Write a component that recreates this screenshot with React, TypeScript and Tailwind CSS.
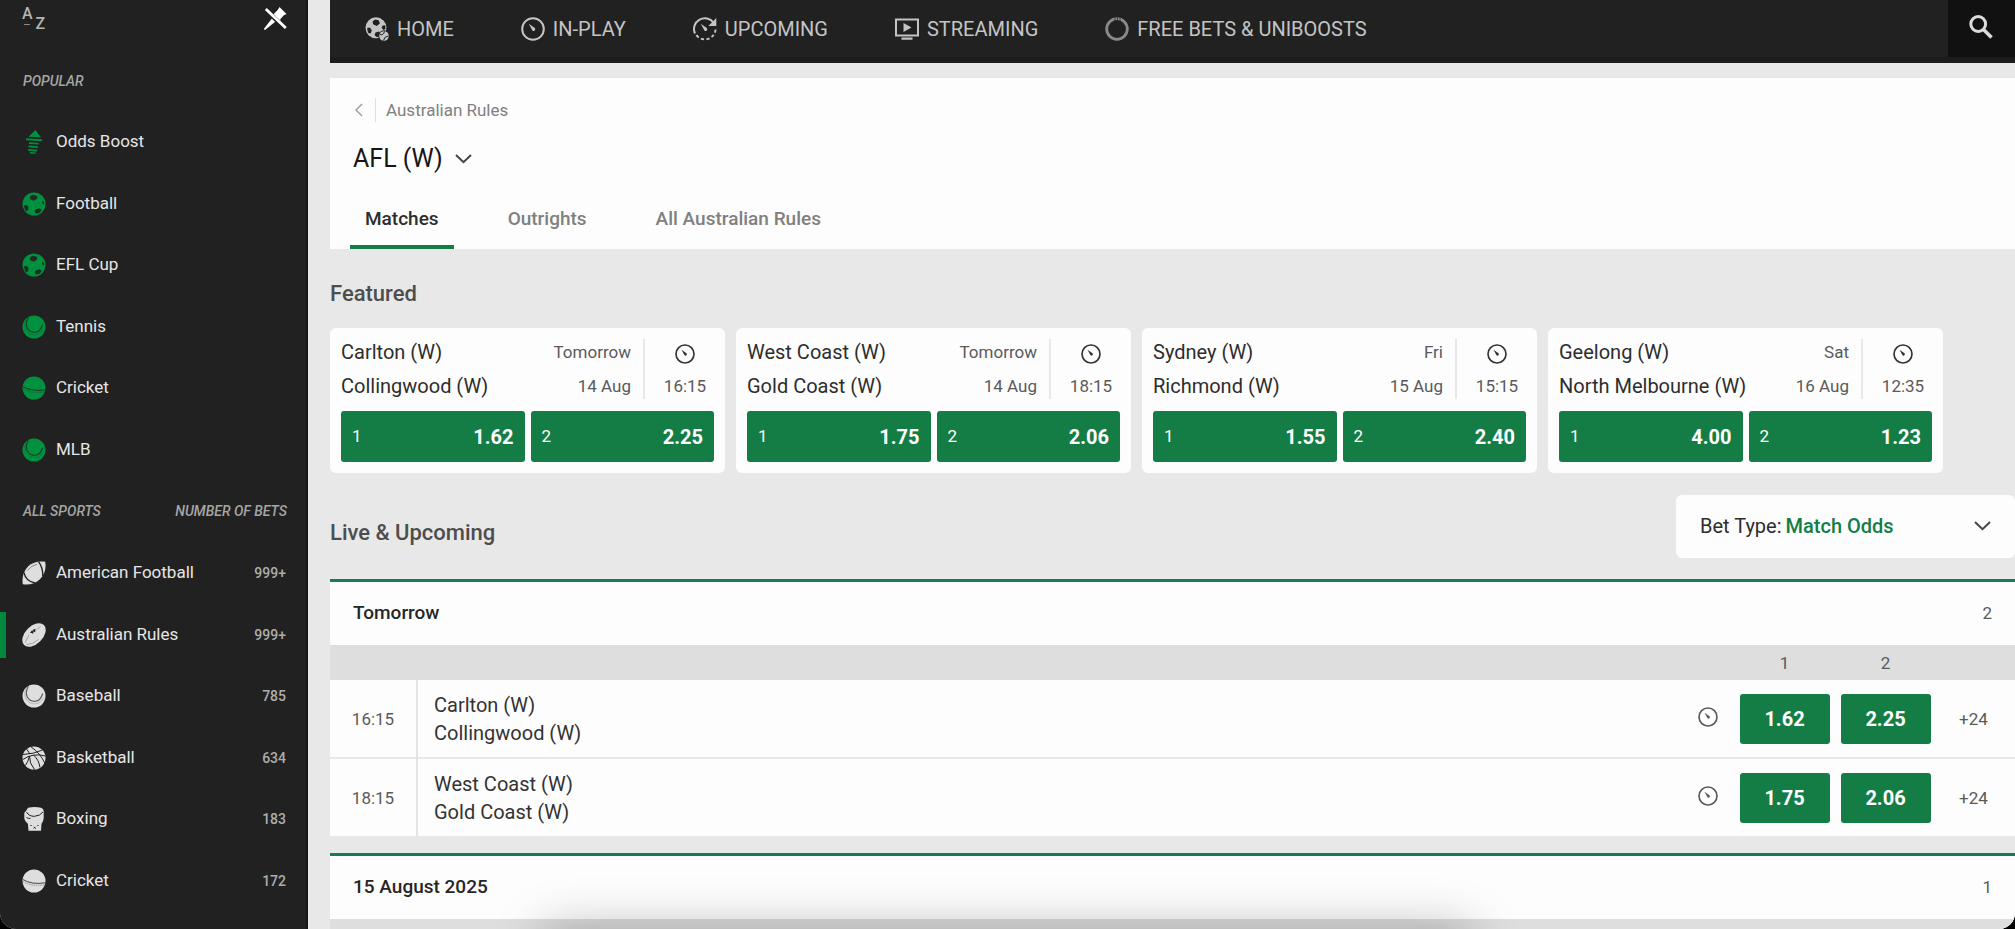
import { useState } from "react";
import type { ReactNode } from "react";

type Sport = { name: string; icon: ReactNode; count?: string; active?: boolean };

function Svg({ size = 24, className = "", children }: { size?: number; className?: string; children: ReactNode }) {
  return (
    <svg width={size} height={size} viewBox="0 0 24 24" fill="none" aria-hidden="true" className={`shrink-0 ${className}`}>
      {children}
    </svg>
  );
}

const BoostIcon = () => (
  <Svg>
    <path d="M13.500 0 19 7.500 6.500 6.800z" fill="currentColor" />
    <path d="m3.800 8.200 16.400 1-.6 2-15.400-1z" fill="currentColor" />
    <path d="m7 12.200 9.800.7-.4 1.700-9.600-.7zM6.700 15.600l9.400.7-.4 1.700-9.300-.7zM6.300 19l9 .7-.4 1.700-8.900-.7zM8 22l6 .4-.4 1.400-5.600-.4z" fill="currentColor" />
  </Svg>
);

const FootballIcon = () => (
  <Svg>
    <circle cx="12" cy="12" r="11.500" fill="currentColor" />
    <path d="m10.500 2.800 4.300 1 .5 2.800-3.400 2.200-3.700-1.500L7.900 4.500zM2 13.500l2.600-.7 2 2.400-.6 3.300-2.300.6Q2 16.500 2 13.500zM13.500 17.500l3.800-1.300 2.400 1.500-1.700 2.900-3.300 1.200-2-1.700zM20.300 8.200l1.800 2.300v2.300l-1.800-1.500z" fill="#1c2d22" />
  </Svg>
);

const BallIcon = () => (
  <Svg>
    <circle cx="12" cy="12" r="11.500" fill="currentColor" />
    <path d="M6.300 2.500Q3 8 5.300 13q2.700 4.800 8 4.300 5.200-.5 7.500-7.800" stroke="#212121" strokeOpacity=".7" strokeWidth="1.100" />
    <path d="M3.800 5Q1.500 10.500 4 15q3.300 5.200 9.500 4.800 5.200-.6 8.200-5.800" stroke="#212121" strokeOpacity=".25" strokeWidth=".8" />
  </Svg>
);

const CricketIcon = () => (
  <Svg>
    <circle cx="12" cy="12" r="11.500" fill="currentColor" />
    <path d="M.8 10.500Q10 16 23.300 13.800" stroke="#212121" strokeOpacity=".8" strokeWidth="1" />
    <path d="M.7 12.600Q10 18 23 15.700" stroke="#212121" strokeOpacity=".45" strokeWidth=".8" strokeDasharray="1.500 .8" />
  </Svg>
);

const AmericanFootballIcon = () => (
  <Svg>
    <path d="M23.200.8c1.200 6-.4 12.400-5 17.200C13.500 22.700 6.500 24.500.8 23.200-.2 17.500 1 10.500 6 5.500 10.500 1 17.500-.4 23.200.8z" fill="currentColor" />
    <path d="M2 11.500Q3.500 20 13 22M16.500.6Q21 6.500 20.800 15" stroke="#212121" strokeWidth="1.400" />
    <path d="M5.500 9.500q3.500-5 9.500-6.300" stroke="#212121" strokeOpacity=".5" strokeWidth=".9" />
  </Svg>
);

const AustralianRulesIcon = () => (
  <Svg>
    <ellipse cx="12" cy="12" rx="14" ry="8.800" transform="rotate(-45 12 12)" fill="currentColor" />
    <path d="M8.500 9.800 13.500 6.500M9.500 7.800l1.700 2.500M11.500 6.600l1.500 2.300" stroke="#212121" strokeWidth="1.300" />
    <path d="M3.200 19.500 7 12M14.500 6.500l4-3M4.500 21.500q6 .3 12-5" stroke="#212121" strokeOpacity=".35" strokeWidth=".9" />
  </Svg>
);

const BasketballIcon = () => (
  <Svg>
    <circle cx="12" cy="12" r="11.500" fill="currentColor" />
    <path d="M1 8.500Q12 8 20.500 4M9 .8Q18 7 22.800 17M.8 13.500Q11 6.500 23.500 10M7.500 10Q7 17 12.500 23.500M11.500 9Q17 14 18 21.500M4.500 3l3.500 5M3.500 19.500Q6 16 7.500 10" stroke="#212121" strokeWidth="1" />
  </Svg>
);

const BoxingIcon = () => (
  <Svg>
    <path d="M6 .8Q13-.6 19 .8q2.700.8 2.700 3.500V11q0 3-2.200 5.700L19 23.700H6.500l-.6-7Q2.300 14 2.300 10.500V6.500q0-2 1.700-2.500z" fill="currentColor" />
    <path d="M4.500 5Q7 9.500 12.500 9.300 18 9 21 5M4.500 10.500q2 1.500 4 .8" stroke="#212121" strokeWidth="1" />
    <path d="M8.500 18.500h1.200M15.300 18.500h1.200M11.800 19.800l1.700 1.700M13.500 19.800l-1.700 1.700" stroke="#212121" strokeWidth="1" />
  </Svg>
);

const ClockIcon = ({ size = 20 }: { size?: number }) => (
  <Svg size={size}>
    <circle cx="12" cy="12" r="10.800" stroke="currentColor" strokeWidth="2" />
    <path d="m7.800 6.800 6 4.300a1.700 1.700 0 0 1-2.400 2.400z" fill="currentColor" />
  </Svg>
);

const UpcomingIcon = () => (
  <Svg>
    <path d="M2 16.500A10.800 10.800 0 0 1 20.800 6" stroke="currentColor" strokeWidth="2" />
    <path d="M23.300 1v8h-8z" fill="currentColor" />
    <path d="M22.600 12.500A10.800 10.800 0 0 1 2.500 17" stroke="currentColor" strokeWidth="2" strokeDasharray="3.200 2.400" />
    <path d="m7.800 6.800 6 4.300a1.700 1.700 0 0 1-2.400 2.400z" fill="currentColor" />
  </Svg>
);

const HomeIcon = () => (
  <Svg>
    <circle cx="11" cy="10.800" r="10.500" fill="currentColor" />
    <path d="m10 2.500 3.700.8 1.200 3.200-3.200 2.400-3.600-1.700L7.600 4.500zM2.200 11l2.600-.5 2 2.700-.9 3.100H3.500Q2.200 14 2.200 11zM17.700 8.500l2.500-.2.300 3.700-2 1-2-2.200zM10.500 15.500l3.500-1 1.500 2-1 3-3 .5-2-2z" fill="#212121" />
    <circle cx="19" cy="19" r="5.800" fill="#212121" />
    <circle cx="19" cy="19" r="4.800" fill="currentColor" />
    <path d="M15 17.500q3.500 1 4.500-3M18.500 23.500q.5-4 5-4.500" stroke="#212121" strokeWidth="1" />
  </Svg>
);

const StreamingIcon = () => (
  <Svg>
    <path d="M1 2.500h22v16H1z" stroke="currentColor" strokeWidth="2" />
    <path d="M8.500 6v9l8-4.500zM6.500 20.500h11v2.300h-11z" fill="currentColor" />
  </Svg>
);

const RingIcon = () => (
  <Svg className="text-[#8a8a8a]">
    <circle cx="12" cy="12" r="10.300" stroke="currentColor" strokeWidth="2.800" />
    <path d="M10 0v4M12.500 0v4M15 0v4" stroke="#212121" strokeWidth=".7" />
  </Svg>
);

const SearchIcon = () => (
  <Svg>
    <circle cx="9.200" cy="9" r="7.400" stroke="currentColor" strokeWidth="3" />
    <path d="m14.500 14.500 8 8" stroke="currentColor" strokeWidth="3.600" />
  </Svg>
);

const UnpinIcon = () => (
  <Svg>
    <path d="m16.500 0 7 7-2.700 1.300-3.600 3.900 1 6.300-4.700-4.700L2 23 .8 22l8.300-10.700L4.200 6.500l6.600.6 3.900-4z" fill="currentColor" />
    <path d="m2 2.200 20.500 19.500" stroke="#212121" strokeWidth="4.600" />
    <path d="m2.800 2 20 19" stroke="currentColor" strokeWidth="2.800" />
  </Svg>
);

const ChevronDown = () => (
  <svg width="17" height="10" viewBox="0 0 17 10" fill="none" aria-hidden="true" className="shrink-0 text-[#444]">
    <path d="m1 1 7.500 7.200L16 1" stroke="currentColor" strokeWidth="2" />
  </svg>
);

const popular: Sport[] = [
  { name: "Odds Boost", icon: <BoostIcon /> },
  { name: "Football", icon: <FootballIcon /> },
  { name: "EFL Cup", icon: <FootballIcon /> },
  { name: "Tennis", icon: <BallIcon /> },
  { name: "Cricket", icon: <CricketIcon /> },
  { name: "MLB", icon: <BallIcon /> },
];

const allSports: Sport[] = [
  { name: "American Football", icon: <AmericanFootballIcon />, count: "999+" },
  { name: "Australian Rules", icon: <AustralianRulesIcon />, count: "999+", active: true },
  { name: "Baseball", icon: <BallIcon />, count: "785" },
  { name: "Basketball", icon: <BasketballIcon />, count: "634" },
  { name: "Boxing", icon: <BoxingIcon />, count: "183" },
  { name: "Cricket", icon: <CricketIcon />, count: "172" },
];

const navItems = [
  { label: "HOME", icon: <HomeIcon /> },
  { label: "IN-PLAY", icon: <ClockIcon size={24} /> },
  { label: "UPCOMING", icon: <UpcomingIcon /> },
  { label: "STREAMING", icon: <StreamingIcon /> },
  { label: "FREE BETS & UNIBOOSTS", icon: <RingIcon /> },
];

const tabs = ["Matches", "Outrights", "All Australian Rules"];

type Match = { home: string; away: string; day: string; date: string; time: string; odds: string[] };

const featured: Match[] = [
  { home: "Carlton (W)", away: "Collingwood (W)", day: "Tomorrow", date: "14 Aug", time: "16:15", odds: ["1.62", "2.25"] },
  { home: "West Coast (W)", away: "Gold Coast (W)", day: "Tomorrow", date: "14 Aug", time: "18:15", odds: ["1.75", "2.06"] },
  { home: "Sydney (W)", away: "Richmond (W)", day: "Fri", date: "15 Aug", time: "15:15", odds: ["1.55", "2.40"] },
  { home: "Geelong (W)", away: "North Melbourne (W)", day: "Sat", date: "16 Aug", time: "12:35", odds: ["4.00", "1.23"] },
];

type Day = { title: string; count: number; matches: Match[] };

const days: Day[] = [
  { title: "Tomorrow", count: 2, matches: featured.slice(0, 2) },
  { title: "15 August 2025", count: 1, matches: [] },
];

function SportList({ items, iconColor }: { items: Sport[]; iconColor: string }) {
  return (
    <ul>
      {items.map((s) => (
        <li key={s.name} className="relative flex odd:h-[62px] even:h-[61px]">
          {s.active && <span className="absolute left-0 top-2 h-[46px] w-1.5 bg-[#00883f]" />}
          <a href="#" className="flex flex-1 items-center pl-[22px] pr-5">
            <span className={iconColor}>{s.icon}</span>
            <span className="ml-2.5 flex-1 text-[17px] text-[#e6e6e6]">{s.name}</span>
            {s.count && <span className="text-sm font-medium text-[#adadad]">{s.count}</span>}
          </a>
        </li>
      ))}
    </ul>
  );
}

function Sidebar() {
  return (
    <aside className="w-[308px] shrink-0 overflow-hidden border-r-2 border-[#151515] bg-[#212121]">
      <div className="flex h-[50px] items-start justify-between pl-[22px] pr-[19px] pt-1.5">
        <button aria-label="Sort alphabetically" className="flex text-base leading-4 font-medium text-[#b5b5b5]">
          <span className="flex flex-col items-center">
            A
            <span className="mt-0.5 h-px w-1.5 bg-[#8a8a8a]" />
          </span>
          <span className="mt-2.5 ml-[3px]">Z</span>
        </button>
        <button aria-label="Unpin menu" className="mt-px text-white"><UnpinIcon /></button>
      </div>
      <h2 className="flex h-[61px] items-center pl-[23px] text-sm font-medium italic text-[#a6a6a6]">POPULAR</h2>
      <SportList items={popular} iconColor="text-[#00913f]" />
      <div className="flex h-[62px] items-center justify-between pl-[23px] pr-[19px] text-sm font-medium italic text-[#a6a6a6]">
        <h2>ALL SPORTS</h2>
        <span>NUMBER OF BETS</span>
      </div>
      <SportList items={allSports} iconColor="text-[#dedede]" />
    </aside>
  );
}

function FeaturedCard({ match }: { match: Match }) {
  return (
    <article className="w-[395px] shrink-0 rounded-md bg-[#fdfdfd] pt-[7px] pb-[11px]">
      <div className="flex items-center pl-[11px]">
        <div className="flex-1 text-xl leading-[34px] whitespace-nowrap text-[#2d2d2d]">
          <p>{match.home}</p>
          <p>{match.away}</p>
        </div>
        <div className="pr-3 text-right text-[17px] leading-[34px] text-[#5a5a5a]">
          <p>{match.day}</p>
          <p>{match.date}</p>
        </div>
        <div className="h-[60px] w-0.5 bg-[#e8e8e8]" />
        <div className="flex w-20 flex-col items-center text-[17px] leading-[34px] text-[#5a5a5a]">
          <span className="flex h-[34px] items-center pt-1 text-[#333]"><ClockIcon /></span>
          <span>{match.time}</span>
        </div>
      </div>
      <div className="mt-2 flex gap-1.5 px-[11px]">
        {match.odds.map((odd, i) => (
          <button key={i} className="flex h-[51px] flex-1 items-center justify-between rounded-[3px] bg-[#147d45] px-[11px] text-white">
            <span className="text-[17px]">{i + 1}</span>
            <span className="text-xl font-bold">{odd}</span>
          </button>
        ))}
      </div>
    </article>
  );
}

function DaySection({ day }: { day: Day }) {
  return (
    <section className="mb-[17px] border-t-3 border-[#147d55] bg-[#fdfdfd]">
      <div className="flex h-[63px] items-center justify-between px-[23px]">
        <h3 className="text-[19px] font-medium text-[#262626]">{day.title}</h3>
        <span className="text-[17px] text-[#5a5a5a]">{day.count}</span>
      </div>
      {day.matches.length === 0 ? (
        <div className="h-[35px] bg-[#dedede]" />
      ) : (
        <table className="w-full table-fixed text-[17px] leading-6 text-[#5a5a5a]">
          <thead className="bg-[#dedede]">
            <tr className="h-[35px]">
              <th className="w-[87px]" />
              <th />
              <th className="w-[52px]" />
              <th scope="col" className="w-[101px] font-normal">1</th>
              <th scope="col" className="w-[101px] font-normal">2</th>
              <th className="w-[79px]" />
            </tr>
          </thead>
          <tbody>
            {day.matches.map((m) => (
              <tr key={m.home} className="h-[78px] border-b-2 border-[#e8e8e8] last:border-b-0">
                <td className="border-r-2 border-[#e3e3e3] text-center">{m.time}</td>
                <td className="pl-4 text-xl leading-7 text-[#333]">
                  <p>{m.home}</p>
                  <p>{m.away}</p>
                </td>
                <td className="pb-1"><span className="flex justify-center"><ClockIcon /></span></td>
                {m.odds.map((odd) => (
                  <td key={odd} className="text-center">
                    <button className="h-[50px] w-[90px] rounded-[3px] bg-[#147d45] text-xl font-bold text-white">{odd}</button>
                  </td>
                ))}
                <td className="pr-1 text-center"><a href="#">+24</a></td>
              </tr>
            ))}
          </tbody>
        </table>
      )}
    </section>
  );
}

export default function App() {
  const [tab, setTab] = useState("Matches");

  return (
    <div className="h-screen bg-black font-[Roboto,sans-serif]">
      <div className="relative flex h-full overflow-hidden rounded-b-2xl bg-[#e8e8e8]">
        <Sidebar />

        <div className="ml-[22px] flex min-w-0 flex-1 flex-col">
          <header className="flex h-[63px] shrink-0 border-b-6 border-[#1c1c1c] bg-[#212121]">
            <nav className="flex flex-1 items-center gap-[67px] pl-[35px]">
              {navItems.map((item) => (
                <a key={item.label} href="#" className="flex items-center gap-2 text-xl whitespace-nowrap text-[#c4c4c4]">
                  {item.icon}
                  {item.label}
                </a>
              ))}
            </nav>
            <button aria-label="Search" className="flex w-[67px] items-center justify-center bg-[#111] pr-0.5 pb-1 text-[#dcdcdc]">
              <SearchIcon />
            </button>
          </header>

          <main>
            <section className="mt-[15px] bg-[#fdfdfd]">
              <div className="flex items-center pl-[25px] pt-5 text-[17px] leading-6 text-[#808080]">
                <button aria-label="Back" className="mr-3">
                  <svg width="8" height="14" viewBox="0 0 8 14" fill="none" aria-hidden="true">
                    <path d="M7 1 1 7l6 6" stroke="#a0a0a0" strokeWidth="1.500" />
                  </svg>
                </button>
                <a href="#" className="border-l border-[#e0e0e0] pl-2.5">Australian Rules</a>
              </div>
              <h1 className="mt-[19px] pl-[23px]">
                <button className="flex items-center gap-3 text-[25px] leading-9 text-[#161616]">
                  AFL (W)
                  <ChevronDown />
                </button>
              </h1>
              <div role="tablist" className="mt-3 flex gap-[39px] pl-5">
                {tabs.map((t) => (
                  <button
                    key={t}
                    role="tab"
                    aria-selected={tab === t}
                    onClick={() => setTab(t)}
                    className={`h-[60px] border-b-4 px-[15px] pt-1 text-[19px] font-medium ${tab === t ? "border-[#147d45] text-[#2d2d2d]" : "border-transparent text-[#808080]"}`}
                  >
                    {t}
                  </button>
                ))}
              </div>
            </section>

            <h2 className="mt-[29px] text-[22px] leading-8 font-medium text-[#4d4d4d]">Featured</h2>
            <div className="mt-[18px] flex gap-[11px] overflow-hidden">
              {featured.map((m) => <FeaturedCard key={m.home} match={m} />)}
            </div>

            <div className="mt-[22px] flex items-start justify-between">
              <h2 className="mt-[22px] text-[22px] leading-8 font-medium text-[#4d4d4d]">Live &amp; Upcoming</h2>
              <div className="flex h-[63px] w-[339px] items-center rounded-md bg-[#fdfdfd] pl-6 pr-6 pb-0.5 text-xl text-[#2d2d2d]">
                <label htmlFor="bet-type">Bet Type:</label>
                <select id="bet-type" className="ml-1 flex-1 appearance-none font-medium text-[#147d45]">
                  <option>Match Odds</option>
                </select>
                <ChevronDown />
              </div>
            </div>

            <div className="mt-[21px]">
              {days.map((d) => <DaySection key={d.title} day={d} />)}
            </div>
          </main>
        </div>

        {/* soft shade rising from the bottom edge */}
        <div className="pointer-events-none absolute inset-x-[27%] top-full h-16 shadow-[0_0_50px_rgba(0,0,0,0.28)]" />
      </div>
    </div>
  );
}
